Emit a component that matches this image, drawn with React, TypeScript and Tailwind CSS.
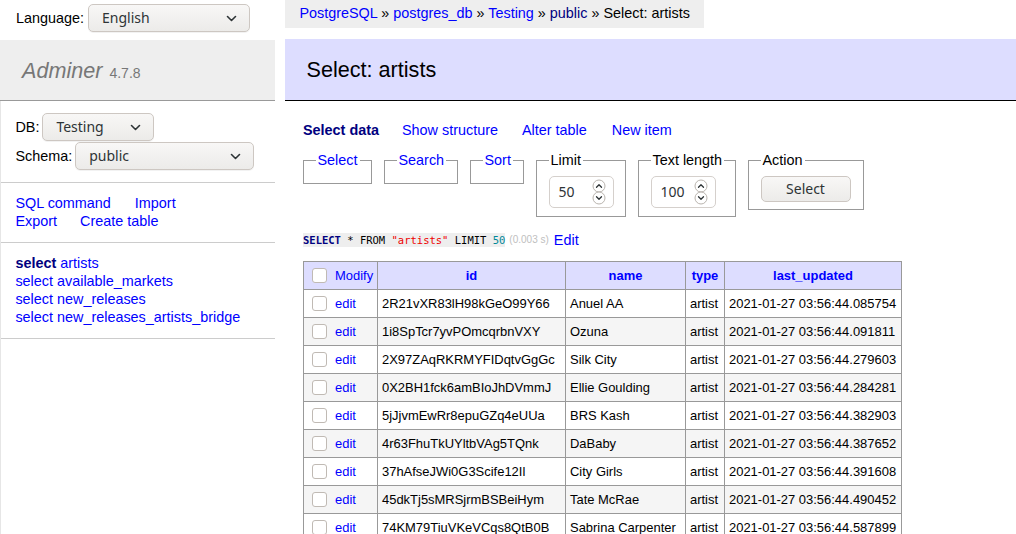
const rows = [
  ['2R21vXR83lH98kGeO99Y66', 'Anuel AA', '2021-01-27 03:56:44.085754'],
  ['1i8SpTcr7yvPOmcqrbnVXY', 'Ozuna', '2021-01-27 03:56:44.091811'],
  ['2X97ZAqRKRMYFIDqtvGgGc', 'Silk City', '2021-01-27 03:56:44.279603'],
  ['0X2BH1fck6amBIoJhDVmmJ', 'Ellie Goulding', '2021-01-27 03:56:44.284281'],
  ['5jJjvmEwRr8epuGZq4eUUa', 'BRS Kash', '2021-01-27 03:56:44.382903'],
  ['4r63FhuTkUYltbVAg5TQnk', 'DaBaby', '2021-01-27 03:56:44.387652'],
  ['37hAfseJWi0G3Scife12Il', 'City Girls', '2021-01-27 03:56:44.391608'],
  ['45dkTj5sMRSjrmBSBeiHym', 'Tate McRae', '2021-01-27 03:56:44.490452'],
  ['74KM79TiuVKeVCqs8QtB0B', 'Sabrina Carpenter', '2021-01-27 03:56:44.587899'],
];

function Chevron() {
  return (
    <svg width="11" height="7" viewBox="0 0 11 7" fill="none">
      <path d="M1.5 1.5l4 4 4-4" stroke="#2e3436" strokeWidth="1.6" strokeLinecap="round" strokeLinejoin="round" />
    </svg>
  );
}

function GtkSelect({ value, className }: { value: string; className: string }) {
  return (
    <div
      className={`flex h-[28px] items-center justify-between rounded-[5px] border border-[#cdc7c2] bg-linear-to-b from-[#f8f7f6] to-[#ecebe9] pl-[13px] pr-[12px] font-['Noto_Sans',sans-serif] text-[14px] text-[#2e3436] shadow-[0_1px_0_rgba(0,0,0,0.05)] ${className}`}
    >
      <span>{value}</span>
      <Chevron />
    </div>
  );
}

function Spinner() {
  return (
    <svg width="14" height="26" viewBox="0 0 14 26" fill="none">
      <circle cx="7" cy="7" r="6" stroke="#b9b4ae" strokeWidth="1" fill="white" />
      <circle cx="7" cy="19" r="6" stroke="#b9b4ae" strokeWidth="1" fill="white" />
      <path d="M4.5 8.2l2.5-2.5 2.5 2.5" stroke="#2e3436" strokeWidth="1.3" strokeLinecap="round" strokeLinejoin="round" />
      <path d="M4.5 17.8l2.5 2.5 2.5-2.5" stroke="#2e3436" strokeWidth="1.3" strokeLinecap="round" strokeLinejoin="round" />
    </svg>
  );
}

function NumberInput({ value }: { value: string }) {
  return (
    <div className="flex h-[32px] w-[65px] items-center justify-between rounded-[5px] border border-[#d5d0cc] bg-white pl-[9px] pr-[7px] font-['Noto_Sans',sans-serif] text-[14px] text-[#2e3436]">
      <span>{value}</span>
      <Spinner />
    </div>
  );
}

function Checkbox() {
  return <span className="inline-block h-[15px] w-[15px] shrink-0 rounded-[3px] border border-[#c0bab4] bg-white" />;
}

export default function App() {
  return (
    <div className="flex h-screen overflow-hidden bg-white font-['Liberation_Sans',Arial,sans-serif] text-[14.4px] leading-[18px] text-black">
      <aside className="flex w-[275px] shrink-0 flex-col">
        <div className="flex h-[40px] shrink-0 items-start px-[16px] pt-[4px]">
          <div className="flex items-center gap-[4px]">
            <span>Language:</span>
            <GtkSelect value="English" className="w-[162px]" />
          </div>
        </div>
        <div className="flex h-[61px] shrink-0 items-center border-b border-[#999] bg-[#eee] pl-[22px] text-[#777]">
          <div className="flex items-baseline">
            <span className="text-[21.6px] italic leading-[27px]">Adminer</span>
            <span className="ml-[7px] text-[14px]">4.7.8</span>
          </div>
        </div>
        <div className="flex-1 border-l border-[#e6e6e6]">
          <div className="flex flex-col gap-[1px] border-b border-[#ccc] px-[14.4px] pb-[11.5px] pt-[12px]">
            <div className="flex items-center gap-[3px]">
              <span>DB:</span>
              <GtkSelect value="Testing" className="w-[112px]" />
            </div>
            <div className="flex items-center gap-[3px]">
              <span>Schema:</span>
              <GtkSelect value="public" className="w-[179px]" />
            </div>
          </div>
          <div className="border-b border-[#ccc] px-[14.4px] py-[11.5px] text-[#00f]">
            <div>
              <a className="mr-[24px]">SQL command</a>
              <a>Import</a>
            </div>
            <div>
              <a className="mr-[23px]">Export</a>
              <a>Create table</a>
            </div>
          </div>
          <div className="border-b border-[#ccc] px-[14.4px] py-[11.5px] text-[#00f]">
            <div>
              <span className="font-bold text-[#000080]">select</span> <a>artists</a>
            </div>
            <div>select available_markets</div>
            <div>select new_releases</div>
            <div>select new_releases_artists_bridge</div>
          </div>
        </div>
      </aside>

      <main className="ml-[10px] flex min-w-0 flex-1 flex-col">
        <div className="h-[28px] shrink-0 self-start whitespace-nowrap bg-[#eee] px-[14.4px] leading-[26px]">
          <a className="text-[#00f]">PostgreSQL</a> » <a className="text-[#00f]">postgres_db</a> »{' '}
          <a className="text-[#00f]">Testing</a> » <a className="text-[#000080]">public</a> » Select: artists
        </div>
        <h2 className="mt-[11px] flex h-[62px] shrink-0 items-center border-b border-black bg-[#ddf] pl-[21.6px] text-[21.6px] font-normal">
          Select: artists
        </h2>

        <div className="shrink-0 pl-[18px] pt-[20px]">
          <div className="flex h-[18px] items-center whitespace-nowrap">
            <span className="mr-[23px] font-bold text-[#000080]">Select data</span>
            <a className="mr-[24px] text-[#00f]">Show structure</a>
            <a className="mr-[25px] text-[#00f]">Alter table</a>
            <a className="text-[#00f]">New item</a>
          </div>

          <div className="mt-[12px] flex items-start gap-[12px]">
            <fieldset className="w-[69px] shrink-0 border border-[#999] pb-[7px] pl-[11.5px] pr-[4px] pt-[7px]">
              <legend className="whitespace-nowrap px-[2px] text-[#00f]">Select</legend>
            </fieldset>
            <fieldset className="w-[74px] shrink-0 border border-[#999] pb-[7px] pl-[11.5px] pr-[4px] pt-[7px]">
              <legend className="whitespace-nowrap px-[2px] text-[#00f]">Search</legend>
            </fieldset>
            <fieldset className="w-[54px] shrink-0 border border-[#999] pb-[7px] pl-[11.5px] pr-[4px] pt-[7px]">
              <legend className="whitespace-nowrap px-[2px] text-[#00f]">Sort</legend>
            </fieldset>
            <fieldset className="w-[90px] shrink-0 border border-[#999] pb-[8px] pl-[11.5px] pr-[4px] pt-[7px]">
              <legend className="whitespace-nowrap px-[2px]">Limit</legend>
              <NumberInput value="50" />
            </fieldset>
            <fieldset className="w-[98px] shrink-0 border border-[#999] pb-[8px] pl-[11.5px] pr-[4px] pt-[7px]">
              <legend className="whitespace-nowrap px-[2px]">Text length</legend>
              <NumberInput value="100" />
            </fieldset>
            <fieldset className="w-[116px] shrink-0 border border-[#999] pb-[7px] pl-[11.5px] pr-[4px] pt-[7px]">
              <legend className="whitespace-nowrap px-[2px]">Action</legend>
              <div className="flex h-[26px] w-[90px] items-center justify-center rounded-[5px] border border-[#cdc7c2] bg-linear-to-b from-[#f8f7f6] to-[#ecebe9] font-['Noto_Sans',sans-serif] text-[14px] text-[#2e3436]">
                Select
              </div>
            </fieldset>
          </div>

          <div className="mt-[14px] flex h-[18px] items-center whitespace-nowrap">
            <code className="bg-[#eee] font-['DejaVu_Sans_Mono',monospace] text-[10.5px] leading-[14px] text-black">
              <span className="font-bold text-[#000080]">SELECT</span> * FROM{' '}
              <span className="text-[#e00]">"artists"</span> LIMIT <span className="text-[#089]">50</span>
            </code>
            <span className="ml-[4px] text-[10px] text-[#c0c0c0]">(0.003 s)</span>
            <a className="ml-[5px] text-[#00f]">Edit</a>
          </div>

          <table className="mt-[12px] w-[598px] table-fixed border-collapse border-l border-t border-[#999] text-[12.96px] leading-[16px]">
            <colgroup>
              <col className="w-[74px]" />
              <col className="w-[188px]" />
              <col className="w-[120px]" />
              <col className="w-[39px]" />
              <col className="w-[177px]" />
            </colgroup>
            <thead>
              <tr className="h-[28px] bg-[#ddf]">
                <td className="border-b border-r border-[#999] pl-[8px]">
                  <div className="flex items-center gap-[8px]">
                    <Checkbox />
                    <a className="text-[#00f]">Modify</a>
                  </div>
                </td>
                <th className="border-b border-r border-[#999] text-center font-bold text-[#00f]">id</th>
                <th className="border-b border-r border-[#999] text-center font-bold text-[#00f]">name</th>
                <th className="border-b border-r border-[#999] text-center font-bold text-[#00f]">type</th>
                <th className="border-b border-r border-[#999] text-center font-bold text-[#00f]">last_updated</th>
              </tr>
            </thead>
            <tbody>
              {rows.map((r, i) => (
                <tr key={r[0]} className={`h-[28px] ${i % 2 === 1 ? 'bg-[#f5f5f5]' : 'bg-white'}`}>
                  <td className="border-b border-r border-[#999] pl-[8px]">
                    <div className="flex items-center gap-[8px]">
                      <Checkbox />
                      <a className="text-[#00f]">edit</a>
                    </div>
                  </td>
                  <td className="overflow-hidden whitespace-nowrap border-b border-r border-[#999] px-[4px]">{r[0]}</td>
                  <td className="overflow-hidden whitespace-nowrap border-b border-r border-[#999] px-[4px]">{r[1]}</td>
                  <td className="overflow-hidden whitespace-nowrap border-b border-r border-[#999] px-[4px]">artist</td>
                  <td className="overflow-hidden whitespace-nowrap border-b border-r border-[#999] px-[4px]">{r[2]}</td>
                </tr>
              ))}
            </tbody>
          </table>
        </div>
      </main>
    </div>
  );
}
